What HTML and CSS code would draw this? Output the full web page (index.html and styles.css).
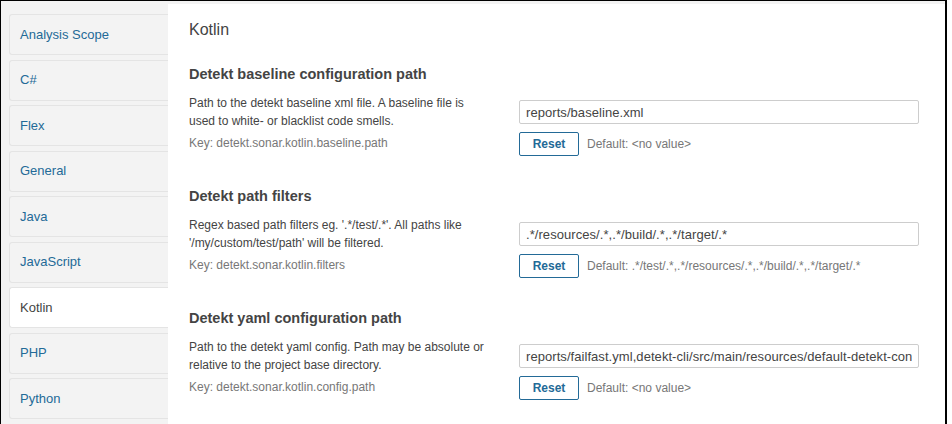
FILE: index.html
```html
<!DOCTYPE html>
<html>
<head>
<meta charset="utf-8">
<link rel="stylesheet" href="styles.css">
</head>
<body>
<div class="window">
  <nav class="sidebar">
    <a class="item">Analysis Scope</a>
    <a class="item">C#</a>
    <a class="item">Flex</a>
    <a class="item">General</a>
    <a class="item">Java</a>
    <a class="item">JavaScript</a>
    <a class="item active">Kotlin</a>
    <a class="item">PHP</a>
    <a class="item">Python</a>
  </nav>
  <main class="panel">
    <h2 class="page-title">Kotlin</h2>

    <section class="setting">
      <h3 class="setting-title">Detekt baseline configuration path</h3>
      <div class="row">
        <div class="desc">
          <p class="desc-text">Path to the detekt baseline xml file. A baseline file is used to white- or blacklist code smells.</p>
          <p class="key">Key: detekt.sonar.kotlin.baseline.path</p>
        </div>
        <div class="field">
          <input class="input" type="text" value="reports/baseline.xml">
          <div class="actions">
            <button class="reset">Reset</button>
            <span class="default">Default: &lt;no value&gt;</span>
          </div>
        </div>
      </div>
    </section>

    <section class="setting">
      <h3 class="setting-title">Detekt path filters</h3>
      <div class="row">
        <div class="desc">
          <p class="desc-text">Regex based path filters eg. '.*/test/.*'. All paths like '/my/custom/test/path' will be filtered.</p>
          <p class="key">Key: detekt.sonar.kotlin.filters</p>
        </div>
        <div class="field">
          <input class="input" type="text" value=".*/resources/.*,.*/build/.*,.*/target/.*">
          <div class="actions">
            <button class="reset">Reset</button>
            <span class="default">Default: .*/test/.*,.*/resources/.*,.*/build/.*,.*/target/.*</span>
          </div>
        </div>
      </div>
    </section>

    <section class="setting">
      <h3 class="setting-title">Detekt yaml configuration path</h3>
      <div class="row">
        <div class="desc">
          <p class="desc-text">Path to the detekt yaml config. Path may be absolute or relative to the project base directory.</p>
          <p class="key">Key: detekt.sonar.kotlin.config.path</p>
        </div>
        <div class="field">
          <input class="input" type="text" value="reports/failfast.yml,detekt-cli/src/main/resources/default-detekt-config.yml">
          <div class="actions">
            <button class="reset">Reset</button>
            <span class="default">Default: &lt;no value&gt;</span>
          </div>
        </div>
      </div>
    </section>
  </main>
</div>
</body>
</html>
```

FILE: styles.css
```css
* { box-sizing: border-box; }

html, body {
  margin: 0;
  padding: 0;
  background: #fff;
  font-family: "Liberation Sans", Arial, sans-serif;
  color: #444;
}

.window {
  width: 947px;
  height: 424px;
  overflow: hidden;
  border-top: 1px solid #000;
  border-left: 1px solid #000;
  border-right: 2px solid #000;
  background: #f3f3f3;
  padding-top: 3px;
  display: flex;
  align-items: stretch;
}

.sidebar {
  width: 167px;
  flex: none;
  padding: 10px 0 0 8px;
  display: flex;
  flex-direction: column;
  gap: 4.5px;
}

.item {
  display: flex;
  align-items: center;
  height: 41px;
  padding-left: 10px;
  padding-bottom: 1px;
  border: 1px solid #e4e4e4;
  border-right: 0;
  border-radius: 3px 0 0 3px;
  background: #f3f3f3;
  color: #236a97;
  font-size: 13px;
  text-decoration: none;
}

.item.active {
  background: #fff;
  color: #444;
}

.panel {
  flex: 1;
  background: #fff;
  padding: 16px 20px 0 21px;
}

.page-title {
  margin: 0 0 24px;
  font-size: 16px;
  font-weight: normal;
  line-height: 20px;
  color: #444;
}

.setting {
  margin-bottom: 30px;
}

.setting-title {
  margin: 0 0 10px;
  font-size: 14.5px;
  font-weight: bold;
  line-height: 20px;
  color: #444;
}

.row {
  display: flex;
}

.desc {
  width: 330px;
  flex: none;
  font-size: 12px;
  line-height: 18px;
}

.desc-text {
  margin: 0;
  width: 300px;
  color: #444;
}

.key {
  margin: 4px 0 0;
  color: #777;
}

.field {
  padding-top: 6px;
}

.input {
  display: block;
  width: 400px;
  height: 24px;
  margin: 0;
  padding: 0 6px;
  border: 1px solid #cdcdcd;
  border-radius: 2px;
  font-family: "Liberation Sans", Arial, sans-serif;
  font-size: 13px;
  letter-spacing: 0.06px;
  color: #444;
  background: #fff;
  outline: none;
}

.actions {
  margin-top: 8px;
  display: flex;
  align-items: center;
}

.reset {
  width: 60px;
  height: 24px;
  margin: 0;
  padding: 0;
  border: 1px solid #236a97;
  border-radius: 2px;
  background: #fff;
  color: #236a97;
  font-family: "Liberation Sans", Arial, sans-serif;
  font-size: 12px;
  font-weight: bold;
}

.default {
  margin-left: 8px;
  font-size: 12px;
  color: #777;
}
```
